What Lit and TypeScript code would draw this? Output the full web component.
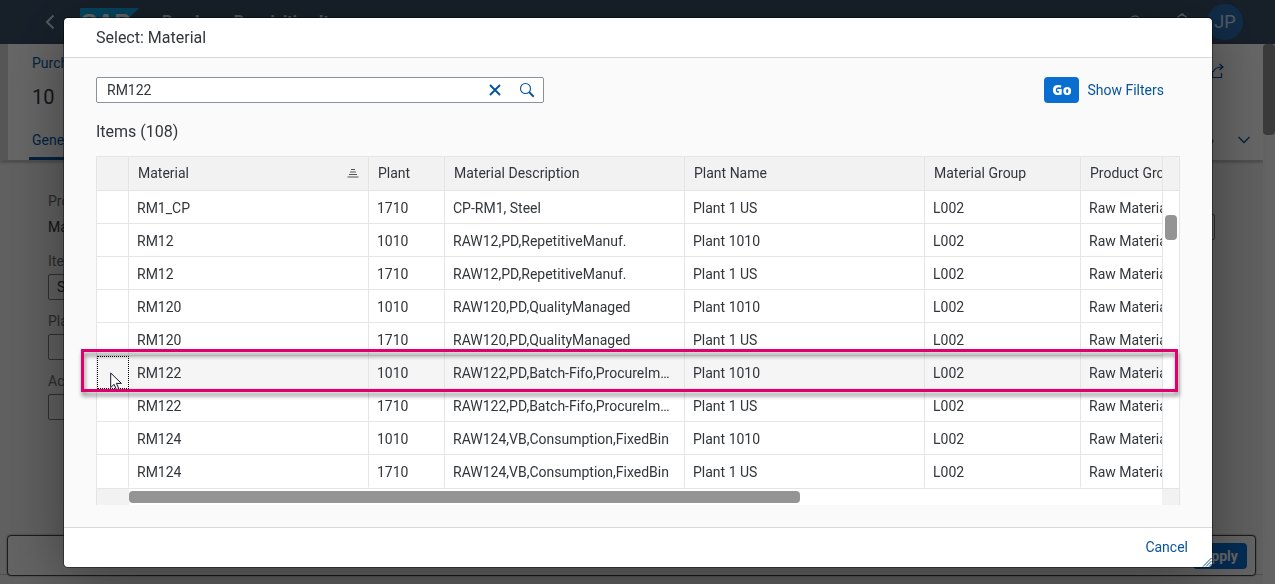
import { LitElement, html, css, svg } from "lit";
import { customElement, state } from "lit/decorators.js";
import { classMap } from "lit/directives/class-map.js";

interface Material {
  material: string;
  plant: string;
  description: string;
}

const MATERIALS: Material[] = [
  { material: "RM1_CP", plant: "1710", description: "CP-RM1, Steel" },
  { material: "RM12", plant: "1010", description: "RAW12,PD,RepetitiveManuf." },
  { material: "RM12", plant: "1710", description: "RAW12,PD,RepetitiveManuf." },
  { material: "RM120", plant: "1010", description: "RAW120,PD,QualityManaged" },
  { material: "RM120", plant: "1710", description: "RAW120,PD,QualityManaged" },
  { material: "RM122", plant: "1010", description: "RAW122,PD,Batch-Fifo,ProcureImmediate" },
  { material: "RM122", plant: "1710", description: "RAW122,PD,Batch-Fifo,ProcureImmediate" },
  { material: "RM124", plant: "1010", description: "RAW124,VB,Consumption,FixedBin" },
  { material: "RM124", plant: "1710", description: "RAW124,VB,Consumption,FixedBin" },
];

const plantName = (plant: string) => (plant === "1010" ? "Plant 1010" : "Plant 1 US");

/* The purchase requisition item page that lies behind the dialog. */
@customElement("item-page")
export class ItemPage extends LitElement {
  static styles = css`
    :host {
      display: flex;
      flex-direction: column;
      height: 100vh;
      overflow: hidden;
      background: #f0f0f0;
      color: #32363a;
      font: 14px/16px Roboto, "Open Sans", sans-serif;
    }
    * { box-sizing: border-box; }
    button { font: inherit; border: 0; padding: 0; background: none; color: inherit; }
    svg { display: block; fill: none; stroke: currentColor; }
    .shell {
      display: flex;
      align-items: center;
      height: 44px;
      flex: none;
      padding: 0 32px 0 44px;
      background: #3a5068;
      color: #d1e0ee;
    }
    .logo { margin-left: 24px; }
    .shell-title { margin-left: 23px; font-weight: 700; font-size: 16px; }
    .tools { display: flex; align-items: center; gap: 28px; margin-left: auto; }
    .avatar {
      display: grid;
      place-items: center;
      width: 36px;
      height: 36px;
      margin-left: -12px;
      border-radius: 50%;
      background: #2a6fb5;
      font-size: 18px;
    }
    .main { flex: 1; display: flex; min-height: 0; }
    .content { flex: 1; display: flex; flex-direction: column; min-width: 0; }
    .head {
      display: flex;
      flex-direction: column;
      height: 117px;
      padding: 11px 12px 0 24px;
      border-left: 8px solid #d8d8d8;
      background: #fff;
      border-bottom: 1px solid #c4c4c4;
      box-shadow: 0 1px 3px rgba(0, 0, 0, 0.3);
    }
    .line { display: flex; justify-content: space-between; }
    a { color: #0854a0; text-decoration: none; }
    h1 { margin: 14px 0 0; font-size: 20px; line-height: 24px; font-weight: 400; }
    .share { color: #0854a0; padding: 8px 26px 0 0; height: 16px; }
    .tabs { display: flex; align-items: center; gap: 24px; margin: auto 0 0 -3px; color: #0854a0; }
    .tab { height: 28px; padding: 0 3px 12px; border-bottom: 3px solid #0854a0; color: #0854a0; }
    .edit { margin: 0 0 12px auto; color: #0854a0; }
    .expand { margin-bottom: 12px; padding-right: 1px; }
    .form { display: flex; flex: 1; justify-content: space-between; padding: 32px 48px 0; }
    .field { display: flex; flex-direction: column; gap: 5px; margin-bottom: 13px; color: #6a6d70; }
    .value { height: 26px; line-height: 26px; color: #32363a; }
    .field input {
      width: 240px;
      height: 26px;
      padding: 0 8px;
      border: 1px solid #75797c;
      border-radius: 2px;
      background: transparent;
      font: inherit;
      color: #32363a;
    }
    .foot {
      flex: none;
      padding: 0 7px 8px;
      background: linear-gradient(#c4c4c4, #c4c4c4) 0 39px / 100% 1px no-repeat;
    }
    .bar {
      display: flex;
      align-items: center;
      justify-content: flex-end;
      height: 41px;
      padding-right: 8px;
      border: 1px solid #444;
      border-radius: 4px;
      background: #f7f7f7;
      box-shadow: 0 0 2px rgba(0, 0, 0, 0.5);
    }
    .apply {
      width: 54px;
      height: 26px;
      border-radius: 4px;
      background: #0a6ed1;
      color: #fff;
      font-weight: 700;
    }
    .scroll { width: 12px; background: #f8f8f8; }
    .thumb { height: 91px; border-radius: 4px; background: #929292; }
  `;

  render() {
    return html`
      <header class="shell">
        <button aria-label="Back">
          ${svg`<svg width="12" height="16" viewBox="0 0 12 16" stroke-width="2"><path d="M9.500 1.500 3 8l6.500 6.500"/></svg>`}
        </button>
        <svg class="logo" width="59" height="29" viewBox="0 0 59 29" stroke="none" role="img" aria-label="SAP">
          <path fill="#0bb1f0" stroke="none" d="M0 0h59L30 29H0z" />
          <text x="1" y="23" font-family="Liberation Sans" font-weight="700" font-size="24" fill="#fff" stroke="none">SAP</text>
        </svg>
        <span class="shell-title">Purchase Requisition Item</span>
        <div class="tools">
          <svg width="18" height="18" viewBox="0 0 18 18" stroke-width="1.500"><circle cx="8" cy="8" r="5" /><path d="m12 12 5 5" /></svg>
          <svg width="18" height="18" viewBox="0 0 18 18" stroke-width="1.500"><path d="M2 14h14l-2-3V7a5 5 0 0 0-10 0v4zM7.500 2.500a1.500 1.500 0 0 1 3 0" /></svg>
          <span class="avatar">JP</span>
        </div>
      </header>
      <div class="main">
        <div class="content">
          <div class="head">
            <div class="line">
              <a href="#">Purchase Requisition</a>
              <button class="share" aria-label="Share">
                <svg width="16" height="16" viewBox="0 0 16 16" stroke-width="1.200">
                  <path d="M3.500 8v6.500h9V10M4.500 9C5 5.500 8 4 14 4M10.500 1l3.500 3-3.500 3" />
                </svg>
              </button>
            </div>
            <h1>10</h1>
            <nav class="tabs">
              <a class="tab" href="#">General Information</a>
              <span class="edit">&rsaquo;</span>
              <button class="expand" aria-label="Expand">
                <svg width="12" height="8" viewBox="0 0 12 8" stroke-width="1.300"><path d="m.5 1 5.500 5.500L11.500 1" /></svg>
              </button>
            </nav>
          </div>
          <div class="form">
            <div>
              <div class="field"><span>Product Type</span><span class="value">Material</span></div>
              <label class="field">Item Type<input disabled value="Standard" /></label>
              <label class="field">Plant<input disabled /></label>
              <label class="field">Account<input disabled /></label>
            </div>
            <label class="field">Material<input disabled /></label>
          </div>
          <div class="foot"><div class="bar"><button class="apply">Apply</button></div></div>
        </div>
        <div class="scroll"><div class="thumb"></div></div>
      </div>
    `;
  }
}

/* Value-help dialog for choosing a material. */
@customElement("material-dialog")
export class MaterialDialog extends LitElement {
  static styles = css`
    :host {
      display: block;
      position: relative;
      border-radius: 4px;
      background: #fff;
      box-shadow: 0 0 0 1px rgba(0, 0, 0, 0.42), 0 10px 60px rgba(0, 0, 0, 0.4);
      color: #32363a;
      font: 14px/16px Roboto, "Open Sans", sans-serif;
    }
    * { box-sizing: border-box; }
    button { font: inherit; border: 0; padding: 0; background: none; color: #0854a0; cursor: pointer; }
    svg { display: block; fill: none; }
    h2 {
      height: 40px;
      margin: 0;
      padding: 0 32px;
      border-bottom: 1px solid #d9d9d9;
      font-size: 16px;
      line-height: 39px;
      font-weight: 400;
    }
    .body { padding: 19px 32px 22px; background: #fafafa; }
    .filters { display: flex; align-items: center; }
    .search {
      display: flex;
      align-items: center;
      width: 448px;
      height: 26px;
      border: 1px solid #89919a;
      border-radius: 2px;
      background: #fff;
    }
    .search input {
      flex: 1;
      min-width: 0;
      height: 24px;
      border: 0;
      outline: 0;
      padding: 0 10px;
      background: transparent;
      font: inherit;
      color: inherit;
    }
    .search button { display: grid; place-items: center; width: 32px; height: 24px; }
    .go {
      width: 35px;
      height: 26px;
      margin-left: auto;
      border-radius: 4px;
      background: #0a6ed1;
      color: #fff;
      font-family: "Open Sans", Roboto, sans-serif;
      font-weight: 800;
    }
    .show { height: 26px; padding: 0 16px 0 8px; }
    h3 { margin: 0; padding: 17px 0 12px; font-size: 16px; line-height: 24px; font-weight: 400; }
    .grid { position: relative; border: 1px solid #e5e5e5; border-width: 1px 0 0 1px; }
    .view { display: flex; }
    .clip { flex: 1; min-width: 0; overflow: hidden; }
    table { width: 1224px; table-layout: fixed; border-collapse: separate; border-spacing: 0; }
    th, td {
      height: 33px;
      padding: 2px 8px 0;
      border: solid #e5e5e5;
      border-width: 0 1px 1px 0;
      background: #fff;
      text-align: left;
      font-weight: 400;
      white-space: nowrap;
      overflow: hidden;
      text-overflow: ellipsis;
    }
    th { height: 34px; padding: 0 9px 1px; background: #f2f2f2; }
    tr:last-child td { border-bottom-color: #fff; }
    .hover td { background: #f5f5f5; }
    .pick { padding: 0; }
    .pick button { display: block; width: 100%; height: 32px; }
    .hover .pick { border: 1px dotted #000; }
    .hover .pick button { height: 31px; }
    .c0 { width: 32px; }
    .c1, .c3, .c4, .c6 { width: 240px; }
    .c2 { width: 76px; }
    .c5 { width: 156px; }
    .sorted { display: flex; align-items: center; justify-content: space-between; }
    .vbar {
      width: 18px;
      border: solid #e5e5e5;
      border-width: 0 1px;
      background: linear-gradient(#f2f2f2 33px, #e5e5e5 33px, #e5e5e5 34px, #fff 34px);
      padding: 58px 2px 0;
    }
    .vthumb { height: 25px; width: 12px; border-radius: 4px; background: #949494; }
    .hbar { display: flex; height: 17px; border-top: 1px solid #e5e5e5; background: #fff; }
    .corner { width: 32px; background: #f2f2f2; }
    .corner.end { width: 18px; border-right: 1px solid #e5e5e5; }
    .track { flex: 1; padding-top: 2px; }
    .hthumb { width: 65%; height: 12px; border-radius: 4px; background: #949494; }
    .marker {
      position: absolute;
      left: -16px;
      right: 2px;
      top: 192px;
      height: 43px;
      border: 3px solid #df006e;
      filter: drop-shadow(1px 4px 2px rgba(0, 0, 0, 0.45));
      pointer-events: none;
    }
    .cursor { position: absolute; left: 13px; top: 215px; pointer-events: none; }
    footer {
      display: flex;
      justify-content: flex-end;
      height: 40px;
      padding: 0 24px 1px;
      border-top: 1px solid #d9d9d9;
    }
    .resize { position: absolute; right: 0; bottom: 0; }
  `;

  @state() private query = "RM122";
  @state() private hovered = 5;

  render() {
    return html`
      <h2>Select: Material</h2>
      <div class="body">
        <div class="filters">
          <div class="search">
            <input
              aria-label="Search"
              .value=${this.query}
              @input=${(e: Event) => (this.query = (e.target as HTMLInputElement).value)}
            />
            <button aria-label="Clear" @click=${() => (this.query = "")}>
              <svg width="12" height="12" viewBox="0 0 12 12" stroke="#0854a0" stroke-width="2"><path d="m1 1 10 10M11 1 1 11" /></svg>
            </button>
            <button aria-label="Find">
              <svg width="16" height="16" viewBox="0 0 16 16" stroke="#0854a0">
                <circle cx="6.500" cy="6.500" r="5" stroke-width="1.100" />
                <path d="m10.300 10.300 4.400 4.400" stroke-width="2" />
              </svg>
            </button>
          </div>
          <button class="go">Go</button>
          <button class="show">Show Filters</button>
        </div>
        <h3>Items (108)</h3>
        <div class="grid">
          <div class="view">
            <div class="clip">
              <table>
                <thead>
                  <tr>
                    <th class="c0"></th>
                    <th class="c1">
                      <div class="sorted">
                        Material
                        <svg width="12" height="10" viewBox="0 0 12 10" stroke="#51555a">
                          <path d="M4 1.500h4M3 4h6M2 6.500h8M.5 9h11" />
                        </svg>
                      </div>
                    </th>
                    <th class="c2">Plant</th>
                    <th class="c3">Material Description</th>
                    <th class="c4">Plant Name</th>
                    <th class="c5">Material Group</th>
                    <th class="c6">Product Group</th>
                  </tr>
                </thead>
                <tbody>
                  ${MATERIALS.map(
                    (m, i) => html`
                      <tr class=${classMap({ hover: i === this.hovered })} @mouseenter=${() => (this.hovered = i)}>
                        <td class="pick"><button aria-label="Select row"></button></td>
                        <td>${m.material}</td>
                        <td>${m.plant}</td>
                        <td>${m.description}</td>
                        <td>${plantName(m.plant)}</td>
                        <td>L002</td>
                        <td>Raw Materials</td>
                      </tr>
                    `
                  )}
                </tbody>
              </table>
            </div>
            <div class="vbar"><div class="vthumb"></div></div>
          </div>
          <div class="hbar">
            <div class="corner"></div>
            <div class="track"><div class="hthumb"></div></div>
            <div class="corner end"></div>
          </div>
          <svg class="cursor" width="14" height="19" viewBox="0 0 14 19">
            <path d="M.7 1v14.500l3.400-3.200 2.400 5.400 2.300-1-2.400-5.300h5z" fill="#fff" stroke="#111827" />
          </svg>
          <div class="marker"></div>
        </div>
      </div>
      <footer><button>Cancel</button></footer>
      <svg class="resize" width="10" height="10" viewBox="0 0 10 10" stroke="#0854a0">
        <path d="m1 9.500 8.500-8.500M4 9.500 9.500 4M7 9.500 9.500 7" />
      </svg>
    `;
  }
}

@customElement("app-root")
export class AppRoot extends LitElement {
  static styles = css`
    :host { display: block; height: 100vh; overflow: hidden; }
    .overlay {
      position: fixed;
      inset: 0;
      padding: 18px 63px 17px 64px;
      background: rgba(0, 0, 0, 0.6);
    }
  `;

  render() {
    return html`
      <item-page inert></item-page>
      <div class="overlay"><material-dialog role="dialog" aria-label="Select: Material"></material-dialog></div>
    `;
  }
}
